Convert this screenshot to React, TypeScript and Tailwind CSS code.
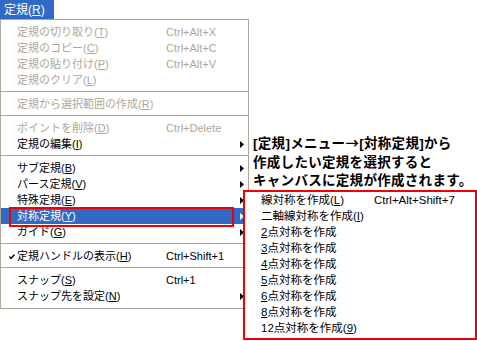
const jp = "font-['Liberation_Sans','Noto_Sans_CJK_JP',sans-serif]";

type Item =
  | { sep: true }
  | {
      sep?: false;
      label: string;
      key?: string;
      shortcut?: string;
      disabled?: boolean;
      sub?: boolean;
      checked?: boolean;
      active?: boolean;
    };

const items: Item[] = [
  { label: "定規の切り取り", key: "T", shortcut: "Ctrl+Alt+X", disabled: true },
  { label: "定規のコピー", key: "C", shortcut: "Ctrl+Alt+C", disabled: true },
  { label: "定規の貼り付け", key: "P", shortcut: "Ctrl+Alt+V", disabled: true },
  { label: "定規のクリア", key: "L", disabled: true },
  { sep: true },
  { label: "定規から選択範囲の作成", key: "R", disabled: true },
  { sep: true },
  { label: "ポイントを削除", key: "D", shortcut: "Ctrl+Delete", disabled: true },
  { label: "定規の編集", key: "I", sub: true },
  { sep: true },
  { label: "サブ定規", key: "B", sub: true },
  { label: "パース定規", key: "V", sub: true },
  { label: "特殊定規", key: "E", sub: true },
  { label: "対称定規", key: "Y", sub: true, active: true },
  { label: "ガイド", key: "G", sub: true },
  { sep: true },
  { label: "定規ハンドルの表示", key: "H", shortcut: "Ctrl+Shift+1", checked: true },
  { sep: true },
  { label: "スナップ", key: "S", shortcut: "Ctrl+1" },
  { label: "スナップ先を設定", key: "N", sub: true },
];

const subItems = [
  { pre: "", label: "線対称を作成", key: "L", shortcut: "Ctrl+Alt+Shift+7" },
  { pre: "", label: "二軸線対称を作成", key: "I" },
  { pre: "2", label: "点対称を作成" },
  { pre: "3", label: "点対称を作成" },
  { pre: "4", label: "点対称を作成" },
  { pre: "5", label: "点対称を作成" },
  { pre: "6", label: "点対称を作成" },
  { pre: "8", label: "点対称を作成" },
  { pre: "", label: "12点対称を作成", key: "9" },
];

function Arrow({ white }: { white?: boolean }) {
  return (
    <svg width="4" height="7" viewBox="0 0 4 7" className="block">
      <path d="M0 0 L4 3.5 L0 7 Z" fill={white ? "#ffffff" : "#000000"} />
    </svg>
  );
}

function MenuRow({ item }: { item: Item }) {
  if (item.sep) {
    return (
      <div className="h-[8px] pt-[3px]">
        <div className="h-px bg-[#aca899]" />
      </div>
    );
  }
  const color = item.active
    ? "bg-[#316ac5] text-white"
    : item.disabled
      ? "text-[#aca899]"
      : "text-black";
  return (
    <div
      className={`relative grid h-[16px] grid-cols-[149px_1fr_auto] items-center pl-[16px] pr-[4px] text-[11px] leading-[16px] ${color}`}
    >
      {item.checked && (
        <svg
          width="6"
          height="6"
          viewBox="0 0 6 6"
          className="absolute left-[8px] top-[6px]"
        >
          <path d="M0.5 2.5 L2 4.5 L5.5 0.5" stroke="#000" strokeWidth="1.3" fill="none" />
        </svg>
      )}
      <span className="whitespace-nowrap">
        {item.label}
        {item.key && (
          <>
            (<u>{item.key}</u>)
          </>
        )}
      </span>
      <span className="whitespace-nowrap">{item.shortcut}</span>
      <span className="w-[4px]">{item.sub && <Arrow white={item.active} />}</span>
      {item.active && (
        <div className="absolute left-[8px] top-[-1px] h-[20px] w-[225px] border-2 border-[#f00000]" />
      )}
    </div>
  );
}

export default function App() {
  return (
    <div className={`relative h-[341px] w-[477px] overflow-hidden bg-white ${jp}`}>
      <div className="flex h-[19px] w-[54px] items-center bg-[#316ac5] pl-[4px] text-[12px] text-white">
        定規(<u>R</u>)
      </div>
      <div className="w-[249px] border border-[#aca899] bg-white py-[4px]">
        {items.map((it, i) => (
          <MenuRow key={i} item={it} />
        ))}
      </div>

      <div className="absolute left-[253px] top-[133px] text-[13.5px] font-bold leading-[18.5px] tracking-[0.3px] text-black">
        <p>
          [定規]メニュー
          <span className="font-['Noto_Sans_CJK_JP',sans-serif]">→</span>
          [対称定規]から
        </p>
        <p>作成したい定規を選択すると</p>
        <p>キャンバスに定規が作成されます。</p>
      </div>

      <div className="absolute left-[243px] top-[190px] h-[150px] w-[234px] border-2 border-[#f00000] bg-white">
        {subItems.map((s, i) => (
          <div
            key={i}
            className="grid h-[16px] grid-cols-[113px_1fr] items-center pl-[16px] text-[11.5px] leading-[16px] text-black"
          >
            <span className="whitespace-nowrap">
              {s.pre && <u>{s.pre}</u>}
              {s.label}
              {s.key && (
                <>
                  (<u>{s.key}</u>)
                </>
              )}
            </span>
            <span className="whitespace-nowrap">{s.shortcut}</span>
          </div>
        ))}
      </div>
    </div>
  );
}
